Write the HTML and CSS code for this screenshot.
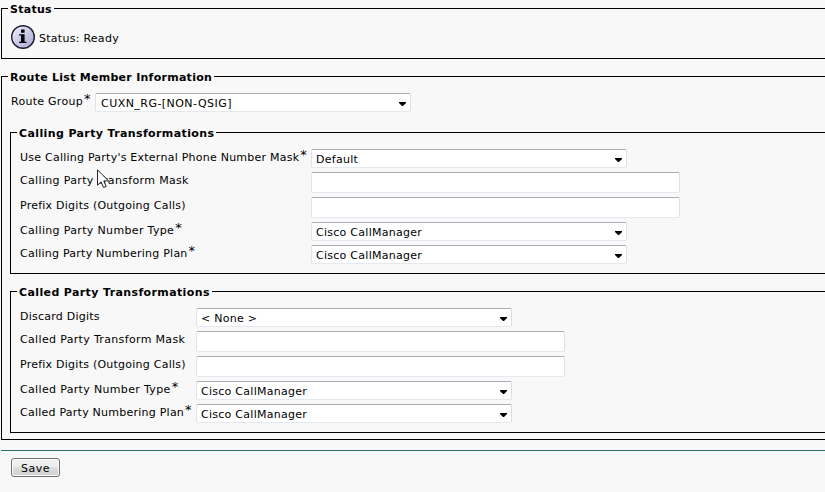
FILE: index.html
```html
<!DOCTYPE html>
<html lang="en">
<head>
<meta charset="utf-8">
<title>Route List Member</title>
<link rel="stylesheet" href="styles.css">
</head>
<body>
<main>
  <section class="box status">
    <h2>Status</h2>
    <div class="status-row">
      <svg width="26" height="26" viewBox="0 0 26 26">
        <defs><linearGradient id="g" x1="0" y1="0" x2="1" y2="1"><stop offset="0" stop-color="#f2f2ff"/><stop offset=".5" stop-color="#cbcbe8"/><stop offset="1" stop-color="#a4a4d2"/></linearGradient></defs>
        <circle cx="13" cy="13" r="11.3" fill="url(#g)" stroke="#1c1c2c" stroke-width="1.4"/>
        <path d="M11 5.5h3.6v3.2H11zM9 10.2h5.6v7.6h1.9v1.3H9v-1.3h2v-6.3H9z" fill="#05050c"/>
      </svg>
      <span>Status: Ready</span>
    </div>
  </section>

  <section class="box member">
    <h2>Route List Member Information</h2>
    <div class="row group">
      <label><span>Route Group</span><b>*</b></label>
      <div class="select wide">CUXN_RG-[NON-QSIG]</div>
    </div>

    <section class="box inner calling">
      <h2>Calling Party Transformations</h2>
      <div class="row"><label><span class="snug">Use Calling Party's External Phone Number Mask</span><b>*</b></label><div class="select">Default</div></div>
      <div class="row"><label><span class="loose">Calling Party Transform Mask</span></label><div class="input"></div></div>
      <div class="row"><label><span class="snug">Prefix Digits (Outgoing Calls)</span></label><div class="input"></div></div>
      <div class="row"><label><span class="loose">Calling Party Number Type</span><b>*</b></label><div class="select">Cisco CallManager</div></div>
      <div class="row"><label><span class="snug">Calling Party Numbering Plan</span><b>*</b></label><div class="select">Cisco CallManager</div></div>
    </section>

    <section class="box inner called">
      <h2>Called Party Transformations</h2>
      <div class="row"><label><span class="snug">Discard Digits</span></label><div class="select">&lt; None &gt;</div></div>
      <div class="row"><label><span class="loose">Called Party Transform Mask</span></label><div class="input"></div></div>
      <div class="row"><label><span class="snug">Prefix Digits (Outgoing Calls)</span></label><div class="input"></div></div>
      <div class="row"><label><span class="loose">Called Party Number Type</span><b>*</b></label><div class="select">Cisco CallManager</div></div>
      <div class="row"><label><span class="snug">Called Party Numbering Plan</span><b>*</b></label><div class="select">Cisco CallManager</div></div>
    </section>
  </section>

  <hr>
  <button type="button">Save</button>
</main>
<svg class="pointer" width="13" height="20" viewBox="0 0 13 20"><path d="M.5.8v15.4l3.6-3.3 2.4 5.6 2.7-1.1-2.4-5.5h4.7z" fill="#fff" stroke="#20202c"/></svg>
</body>
</html>
```

FILE: styles.css
```css
* { box-sizing: border-box; }
body {
  margin: 0;
  height: 492px;
  overflow: hidden;
  background: #f8f8f8;
  color: #000;
  font: 11px/17px Verdana, "DejaVu Sans", sans-serif;
  letter-spacing: .27px;
}
main { padding: 8px 0 0 1px; }
.box { border: 1px solid #000; border-right: 0; }
h2 {
  width: fit-content;
  height: 14px;
  margin: -8px 0 0 6px;
  padding: 0 2px;
  background: #f8f8f8;
  font-size: 11px;
  line-height: 18px;
  font-weight: bold;
  white-space: nowrap;
}
.status { height: 51px; }
.status-row { display: flex; align-items: center; gap: 3px; margin: 9px 0 0 8px; height: 26px; }
.status-row span { padding-top: 2px; }
.member { height: 364px; margin-top: 17px; }
.row { display: flex; margin-bottom: 4px; }
.group { margin: 10px 0 0 9px; }
label { flex: none; white-space: nowrap; height: 17px; }
label b {
  position: relative;
  top: -2px;
  margin-left: 1px;
  font-size: 13px;
  line-height: 0;
  font-weight: normal;
}
.snug { letter-spacing: .24px; }
.loose { letter-spacing: .34px; }
.group label { width: 84px; }
.inner { height: 142px; margin: 20px 0 0 8px; }
.inner.called { margin-top: 17px; }
.inner h2 { margin-bottom: 10px; letter-spacing: .38px; }
.inner .row { margin-left: 9px; }
.calling label { width: 291px; }
.called label { width: 176px; }
.select, .input {
  background: #fff;
  border: 1px solid #e2e3ea;
  border-color: #abadb3 #dbdfe6 #e3e9ef #e2e3ea;
  border-radius: 2px;
}
.input { width: 369px; height: 21px; }
.select {
  display: flex;
  justify-content: space-between;
  width: 316px;
  height: 19px;
  padding: 0 4px;
  line-height: 19px;
  white-space: nowrap;
}
.select.wide { padding-left: 5px; letter-spacing: .46px; }
.select::after {
  content: "";
  width: 7px;
  height: 4px;
  margin-top: 8px;
  background: #000;
  clip-path: polygon(0 0, 100% 0, 100% 1px, 4px 4px, 3px 4px, 0 1px);
}
hr { height: 1px; margin: 10px 0 7px; border: 0; background: #2f6f73; }
button {
  display: block;
  width: 49px;
  height: 19px;
  margin-left: 10px;
  padding: 1px 0 0;
  border: 1px solid #707070;
  border-radius: 3px;
  background: linear-gradient(#f2f2f2, #ebebeb 50%, #dddddd 50%, #cfcfcf);
  box-shadow: inset 0 0 0 1px #fcfcfc;
  color: #000;
  font: 11px/18px Verdana, "DejaVu Sans", sans-serif;
  letter-spacing: .5px;
}
.pointer { position: absolute; left: 97px; top: 169px; }
```
